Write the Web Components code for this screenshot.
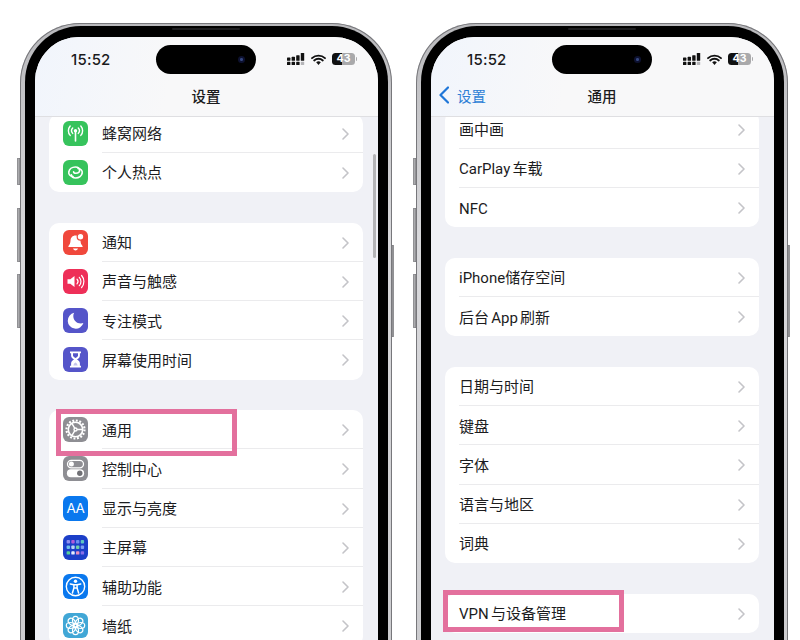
<!DOCTYPE html>
<html lang="zh">
<head>
<meta charset="utf-8">
<title>设置</title>
<style>
    html, body {
        margin: 0;
        height: 640px;
        overflow: hidden;
        background: #fff;
    }

    body {
        font-family: 'Roboto', 'Noto Sans CJK SC', sans-serif;
    }

    .phones {
        display: flex;
        gap: 24px;
        box-sizing: border-box;
        height: 640px;
        overflow: hidden;
        padding: 23px 0 0 20px;
    }
</style>
</head>
<body>
<div class="phones">
    <ios-phone title-text="设置" list-shift="-2" scrollbar>
        <settings-card>
            <settings-row icon="cellular">蜂窝网络</settings-row>
            <settings-row icon="hotspot" last>个人热点</settings-row>
        </settings-card>
        <settings-card>
            <settings-row icon="bell">通知</settings-row>
            <settings-row icon="sound">声音与触感</settings-row>
            <settings-row icon="moon">专注模式</settings-row>
            <settings-row icon="hourglass" last>屏幕使用时间</settings-row>
        </settings-card>
        <settings-card>
            <settings-row icon="gear">通用<pink-box slot="over" style="left:7px;top:-1px;width:181px;height:47px"></pink-box></settings-row>
            <settings-row icon="toggles">控制中心</settings-row>
            <settings-row icon="display">显示与亮度</settings-row>
            <settings-row icon="home">主屏幕</settings-row>
            <settings-row icon="access">辅助功能</settings-row>
            <settings-row icon="flower">墙纸</settings-row>
        </settings-card>
    </ios-phone>
    <ios-phone title-text="通用" back-text="设置" list-shift="-6">
        <settings-card>
            <settings-row>画中画</settings-row>
            <settings-row>CarPlay 车载</settings-row>
            <settings-row last>NFC</settings-row>
        </settings-card>
        <settings-card>
            <settings-row>iPhone储存空间</settings-row>
            <settings-row last>后台 App 刷新</settings-row>
        </settings-card>
        <settings-card>
            <settings-row>日期与时间</settings-row>
            <settings-row>键盘</settings-row>
            <settings-row>字体</settings-row>
            <settings-row>语言与地区</settings-row>
            <settings-row last>词典</settings-row>
        </settings-card>
        <settings-card>
            <settings-row last>VPN 与设备管理<pink-box slot="over" style="left:-2px;top:-4px;width:181px;height:42px"></pink-box></settings-row>
        </settings-card>
    </ios-phone>
</div>

<script>
const HOME_DOTS = [
    ['#8f8ff0', '#b05ad8', '#6d8cf0', '#5fc7c0'],
    ['#6fc0e8', '#b8d3f5', '#6fd0a8', '#7fa0f0'],
    ['#58d09a', '#e6eefc', '#e88fc0', '#8a6fe8']
];

const ICONS = {
    cellular: {
        bg: '#36c35c',
        svg: `<g fill="none" stroke="#fff" stroke-width="1.4" stroke-linecap="round">
                <path d="M12.5 10v10" stroke-width="1.6"/>
                <path d="M9.7 7a4 4 0 0 0 0 5.4M15.3 7a4 4 0 0 1 0 5.4M7.2 5a7 7 0 0 0 0 9.4M17.8 5a7 7 0 0 1 0 9.4"/>
              </g><circle cx="12.5" cy="9.7" r="1.7" fill="#fff"/>`
    },
    hotspot: {
        bg: '#36c35c',
        svg: `<g fill="none" stroke="#fff" stroke-width="1.6" stroke-linecap="round">
                <path d="M10 16.5C7 16.2 5.400 14.300 5.800 12 6.300 9.300 9 7 12.300 7c2.700 0 4.300 1.500 4.300 3.200 0 1.900-1.700 3-3.700 3-1.400 0-2.300-.6-2.300-1.500"/>
                <path d="M15 8.500c3 .3 4.600 2.200 4.200 4.500-.5 2.700-3.200 5-6.500 5-2.700 0-4.300-1.500-4.300-3.200"/>
              </g>`
    },
    bell: {
        bg: '#f0483c',
        svg: `<path d="M12.5 5.5c-3 0-4.900 2.200-5 5.200-.1 2.300-.7 3.800-2 5.200-.4.500-.1 1.100.5 1.100h13c.6 0 .9-.6.500-1.100-1.300-1.400-1.900-2.900-2-5.200-.1-3-2-5.200-5-5.200z" fill="#fff"/>
              <path d="M10 18.600h5c-.4 1.200-1.300 1.800-2.500 1.800s-2.100-.6-2.500-1.800z" fill="#fff"/>
              <circle cx="17.5" cy="6.800" r="3.300" fill="#fff" stroke="#f0483c" stroke-width="1.2"/>`
    },
    sound: {
        bg: '#ee2f58',
        svg: `<path d="M4.500 10.300h2.800l4.200-3.400v11.200l-4.200-3.400H4.500z" fill="#fff"/>
              <g fill="none" stroke="#fff" stroke-width="1.2" stroke-linecap="round">
                <path d="M14 10.200a3.400 3.400 0 0 1 0 4.600M16.300 8.300a6.200 6.200 0 0 1 0 8.400M18.600 6.500a9 9 0 0 1 0 12"/>
              </g>`
    },
    moon: {
        bg: '#5555c9',
        svg: `<path d="M11.200 4.800a8 8 0 1 0 9.200 10.200c-.8.300-1.700.4-2.600.4-4.200 0-7.500-3.300-7.500-7.500 0-1.100.3-2.200.9-3.100z" fill="#fff"/>`
    },
    hourglass: {
        bg: '#5555c9',
        svg: `<path d="M7 4.500h11v1.800h-1.100v2.400c0 1.800-1.500 3-2.900 3.800 1.400.8 2.900 2 2.900 3.800v2.400H18v1.800H7v-1.800h1.100v-2.400c0-1.800 1.500-3 2.900-3.800-1.400-.8-2.900-2-2.900-3.800V6.300H7z" fill="#fff"/>
              <path d="M10 6.300h5v2.200c0 .8-1.200 1.800-2.500 2.500-1.300-.7-2.500-1.700-2.500-2.500z" fill="#5555c9"/>
              <path d="M10.300 18.400c.5-1.700 1.200-2.400 2.200-3 1 .6 1.700 1.300 2.200 3z" fill="#5555c9" opacity=".35"/>`
    },
    gear: {
        bg: '#8e8e93',
        svg: `<circle cx="12.5" cy="12.5" r="9" fill="none" stroke="#fff" stroke-width="2.2" stroke-dasharray="1.9 1.64"/>
              <circle cx="12.5" cy="12.5" r="7.2" fill="none" stroke="#fff" stroke-width="1.6"/>
              <g fill="none" stroke="#fff" stroke-width="1.4">
                <circle cx="12.5" cy="12.5" r="1.5"/>
                <path d="M14 12.500h5.200M11.700 11.200L9 6.600M11.700 13.800L9 18.400"/>
              </g>`
    },
    toggles: {
        bg: '#8e8e93',
        svg: `<rect x="4.500" y="4.300" width="16" height="7.600" rx="3.800" fill="none" stroke="#fff" stroke-width="1.3"/>
              <circle cx="8.400" cy="8.100" r="2.500" fill="#fff"/>
              <rect x="3.900" y="13.200" width="17.200" height="8" rx="4" fill="#fff"/>
              <circle cx="16.800" cy="17.200" r="2.700" fill="#707075"/>`
    },
    display: {
        bg: '#0a78ee',
        text: 'AA'
    },
    home: {
        bg: '#1c3fc8',
        svg: `<g>${HOME_DOTS.map((line, y) => line.map((c, x) =>
                `<rect x="${3.6 + x * 4.7}" y="${5 + y * 5.6}" width="3.400" height="3.400" rx=".9" fill="${c}"/>`
            ).join('')).join('')}</g>`
    },
    access: {
        bg: '#0a78ee',
        svg: `<circle cx="12.5" cy="12.5" r="9.200" fill="none" stroke="#fff" stroke-width="1.4"/>
              <circle cx="12.5" cy="7.300" r="1.700" fill="#fff"/>
              <path d="M7.300 9.900l3.600.9v3.200l-1.500 5M17.700 9.900l-3.600.9v3.200l1.500 5M10.900 10.800h3.200M10.900 14h3.200" fill="none" stroke="#fff" stroke-width="1.5" stroke-linecap="round" stroke-linejoin="round"/>`
    },
    flower: {
        bg: '#41a7d6',
        svg: `<g fill="none" stroke="#fff" stroke-width="1.2">${[0, 45, 90, 135, 180, 225, 270, 315].map(a =>
                `<ellipse cx="12.5" cy="7.200" rx="3" ry="3.900" transform="rotate(${a} 12.5 12.5)"/>`
            ).join('')}<circle cx="12.5" cy="12.5" r="2.400"/></g>`
    }
};

class PinkBox extends HTMLElement {
    constructor() {
        super();
        this.attachShadow({ mode: 'open' });
        this.shadowRoot.innerHTML = `
            <style>
                :host {
                    position: absolute;
                    box-sizing: border-box;
                    border: 5px solid #e3709d;
                    pointer-events: none;
                    z-index: 5;
                }
            </style>
        `;
    }
}

class AppIcon extends HTMLElement {
    constructor() {
        super();
        this.attachShadow({ mode: 'open' });
    }

    connectedCallback() {
        const icon = ICONS[this.getAttribute('name')];
        this.shadowRoot.innerHTML = `
            <style>
                :host {
                    display: flex;
                    align-items: center;
                    justify-content: center;
                    width: 25px;
                    height: 25px;
                    border-radius: 6px;
                    background: ${icon.bg};
                    color: #fff;
                    font: 400 13.5px 'Inter', sans-serif;
                    letter-spacing: -0.5px;
                    overflow: hidden;
                }

                svg {
                    display: block;
                }
            </style>
            ${icon.text ? icon.text : `<svg width="25" height="25" viewBox="0 0 25 25">${icon.svg}</svg>`}
        `;
    }
}

class SettingsRow extends HTMLElement {
    constructor() {
        super();
        this.attachShadow({ mode: 'open' });
    }

    connectedCallback() {
        const icon = this.getAttribute('icon');
        this.shadowRoot.innerHTML = `
            <style>
                :host {
                    display: block;
                    position: relative;
                }

                .row {
                    display: flex;
                    align-items: center;
                    height: 39.25px;
                    padding-left: 14px;
                    font-size: 15px;
                    line-height: 20px;
                    word-spacing: -1.5px;
                    color: #1c1c1e;
                }

                app-icon {
                    margin-right: 14px;
                }

                .body {
                    flex: 1;
                    align-self: stretch;
                    display: flex;
                    align-items: center;
                    justify-content: space-between;
                    padding-right: 14px;
                    box-shadow: inset 0 -1px 0 #ebebed;
                }

                :host([last]) .body {
                    box-shadow: none;
                }

                .label {
                    padding-top: 2px;
                }

                svg {
                    display: block;
                    margin-top: 1px;
                }
            </style>
            <div class="row">
                ${icon ? `<app-icon name="${icon}"></app-icon>` : ''}
                <div class="body">
                    <span class="label"><slot></slot></span>
                    <svg width="7" height="12" viewBox="0 0 7 12" fill="none" stroke="#c4c4c8" stroke-width="1.6" stroke-linecap="round" stroke-linejoin="round">
                        <path d="M1 1l5 5-5 5"/>
                    </svg>
                </div>
            </div>
            <slot name="over"></slot>
        `;
    }
}

class SettingsCard extends HTMLElement {
    constructor() {
        super();
        this.attachShadow({ mode: 'open' });
        this.shadowRoot.innerHTML = `
            <style>
                :host {
                    display: block;
                    background: #fff;
                    border-radius: 10px;
                }
            </style>
            <slot></slot>
        `;
    }
}

class StatusBar extends HTMLElement {
    constructor() {
        super();
        this.attachShadow({ mode: 'open' });
        this.shadowRoot.innerHTML = `
            <style>
                :host {
                    display: grid;
                    grid-template-columns: 1fr auto 1fr;
                    align-items: center;
                    height: 29px;
                    padding: 8px 22px 0 36px;
                    color: #1b1b1d;
                }

                .time {
                    font-family: 'Inter', sans-serif;
                    font-size: 15px;
                    font-weight: 500;
                    letter-spacing: 0.2px;
                }

                .island {
                    position: relative;
                    left: -8px;
                    width: 100px;
                    height: 29px;
                    border-radius: 15px;
                    background: #000;
                }

                .island i {
                    position: absolute;
                    right: 11px;
                    top: 11px;
                    width: 7px;
                    height: 7px;
                    border-radius: 50%;
                    background: radial-gradient(circle, #34467e 0 25%, #0d1130 35% 100%);
                }

                .icons {
                    display: flex;
                    align-items: center;
                    justify-content: flex-end;
                    gap: 6px;
                }

                .battery {
                    position: relative;
                    width: 23px;
                    height: 12px;
                    margin-right: 1px;
                    border-radius: 3.5px;
                    background: linear-gradient(90deg, #111 0 43%, #a9a9ab 43% 100%);
                    color: #fff;
                    font-family: 'Inter', sans-serif;
                    font-size: 10.5px;
                    font-weight: 700;
                    line-height: 12px;
                    text-align: center;
                }

                .battery::after {
                    content: '';
                    position: absolute;
                    right: -2px;
                    top: 4px;
                    width: 1.5px;
                    height: 4px;
                    border-radius: 0 1px 1px 0;
                    background: #a9a9ab;
                }

                svg {
                    display: block;
                }
            </style>
            <span class="time">15:52</span>
            <div class="island"><i></i></div>
            <div class="icons">
                <svg width="18" height="12" viewBox="0 0 18 12" fill="#111">
                    <rect x="0" y="4.6" width="3.4" height="3.2" rx=".6"/>
                    <rect x="0" y="8.8" width="3.4" height="3.2" rx=".6"/>
                    <rect x="4.6" y="3.8" width="3.4" height="4" rx=".6"/>
                    <rect x="4.6" y="8.8" width="3.4" height="3.2" rx=".6"/>
                    <rect x="9.2" y="2.2" width="3.4" height="5.6" rx=".6"/>
                    <rect x="9.2" y="8.8" width="3.4" height="3.2" rx=".6"/>
                    <rect x="13.8" y="0" width="3.4" height="7.8" rx=".6"/>
                    <rect x="13.8" y="8.8" width="3.4" height="3.2" rx=".6" fill="#b5b5b8"/>
                </svg>
                <svg width="15" height="11" viewBox="0 0 15 11">
                    <path d="M7.5 11L5.2 8.300a3.300 3.300 0 0 1 4.600 0z" fill="#111"/>
                    <path d="M1 4.200a9.300 9.300 0 0 1 13 0M3.200 6.500a6.200 6.200 0 0 1 8.600 0" fill="none" stroke="#111" stroke-width="1.8" stroke-linecap="round"/>
                </svg>
                <div class="battery">43</div>
            </div>
        `;
    }
}

class NavBar extends HTMLElement {
    constructor() {
        super();
        this.attachShadow({ mode: 'open' });
    }

    connectedCallback() {
        const back = this.getAttribute('back-text');
        this.shadowRoot.innerHTML = `
            <style>
                :host {
                    display: grid;
                    grid-template-columns: 1fr auto 1fr;
                    align-items: center;
                    height: 42px;
                    padding-right: 1px;
                    font-size: 14.5px;
                }

                .title {
                    padding-top: 2px;
                    font-weight: 500;
                    color: #1b1b1d;
                }

                .back {
                    display: flex;
                    align-items: center;
                    gap: 8px;
                    padding-left: 8px;
                    color: #2e7fd6;
                }

                .back span {
                    padding-top: 2px;
                }

                svg {
                    display: block;
                }
            </style>
            <div class="back">
                ${back ? `<svg width="10" height="18" viewBox="0 0 10 18" fill="none" stroke="#1f76d8" stroke-width="2.2" stroke-linecap="round" stroke-linejoin="round"><path d="M9 1.5L1.5 9 9 16.5"/></svg><span>${back}</span>` : ''}
            </div>
            <div class="title">${this.getAttribute('title-text')}</div>
            <div></div>
        `;
    }
}

class IosPhone extends HTMLElement {
    constructor() {
        super();
        this.attachShadow({ mode: 'open' });
    }

    connectedCallback() {
        const back = this.getAttribute('back-text');
        const shift = this.getAttribute('list-shift') || 0;
        this.shadowRoot.innerHTML = `
            <style>
                :host {
                    display: block;
                    position: relative;
                    flex: none;
                    box-sizing: border-box;
                    width: 372px;
                    height: 720px;
                    padding: 3px 4px 3px 5px;
                    border-radius: 60px;
                    background: linear-gradient(#b9b9bc, #d9d9dc 30%, #c9c9cc);
                    box-shadow: inset 0 0 0 1px #77777b;
                }

                .bezel {
                    height: 100%;
                    box-sizing: border-box;
                    padding: 10.5px 10px 10px 10px;
                    border-radius: 56px;
                    background: #000;
                }

                .screen {
                    position: relative;
                    height: 100%;
                    overflow: hidden;
                    border-radius: 44px;
                    background: #f0f1f6;
                }

                .top {
                    position: relative;
                    z-index: 2;
                    background: linear-gradient(100deg, #f1f5fc, #f8f8f9 40%);
                    box-shadow: 0 1px 0 #dfdfe2;
                }

                .list {
                    display: flex;
                    flex-direction: column;
                    gap: 30.5px;
                    margin-top: ${shift}px;
                    padding: 0 15px 0 14px;
                }

                .scrollbar {
                    position: absolute;
                    right: 2.5px;
                    top: 117px;
                    width: 2.5px;
                    height: 104px;
                    border-radius: 2px;
                    background: #b4b4b7;
                    z-index: 3;
                }

                .speaker {
                    position: absolute;
                    left: 152px;
                    top: 4.5px;
                    width: 68px;
                    height: 2px;
                    border-radius: 1px;
                    background: #1c1c1e;
                }

                .btn {
                    position: absolute;
                    width: 3px;
                    background: #ababae;
                    box-shadow: inset 0 0 0 .5px #77777b;
                }

                .left { left: -3px; border-radius: 1px 0 0 1px; }
                .right { right: -2px; width: 2px; border-radius: 0 1px 1px 0; }
            </style>
            <div class="btn left" style="top:135px;height:27px"></div>
            <div class="btn left" style="top:185px;height:54px"></div>
            <div class="btn left" style="top:251px;height:54px"></div>
            <div class="btn right" style="top:222px;height:92px"></div>
            <div class="speaker"></div>
            <div class="bezel">
                <div class="screen">
                    <div class="top">
                        <status-bar></status-bar>
                        <nav-bar title-text="${this.getAttribute('title-text')}" ${back ? `back-text="${back}"` : ''}></nav-bar>
                    </div>
                    <div class="list"><slot></slot></div>
                    ${this.hasAttribute('scrollbar') ? '<div class="scrollbar"></div>' : ''}
                </div>
            </div>
        `;
    }
}

customElements.define('pink-box', PinkBox);
customElements.define('app-icon', AppIcon);
customElements.define('settings-row', SettingsRow);
customElements.define('settings-card', SettingsCard);
customElements.define('status-bar', StatusBar);
customElements.define('nav-bar', NavBar);
customElements.define('ios-phone', IosPhone);
</script>
</body>
</html>
